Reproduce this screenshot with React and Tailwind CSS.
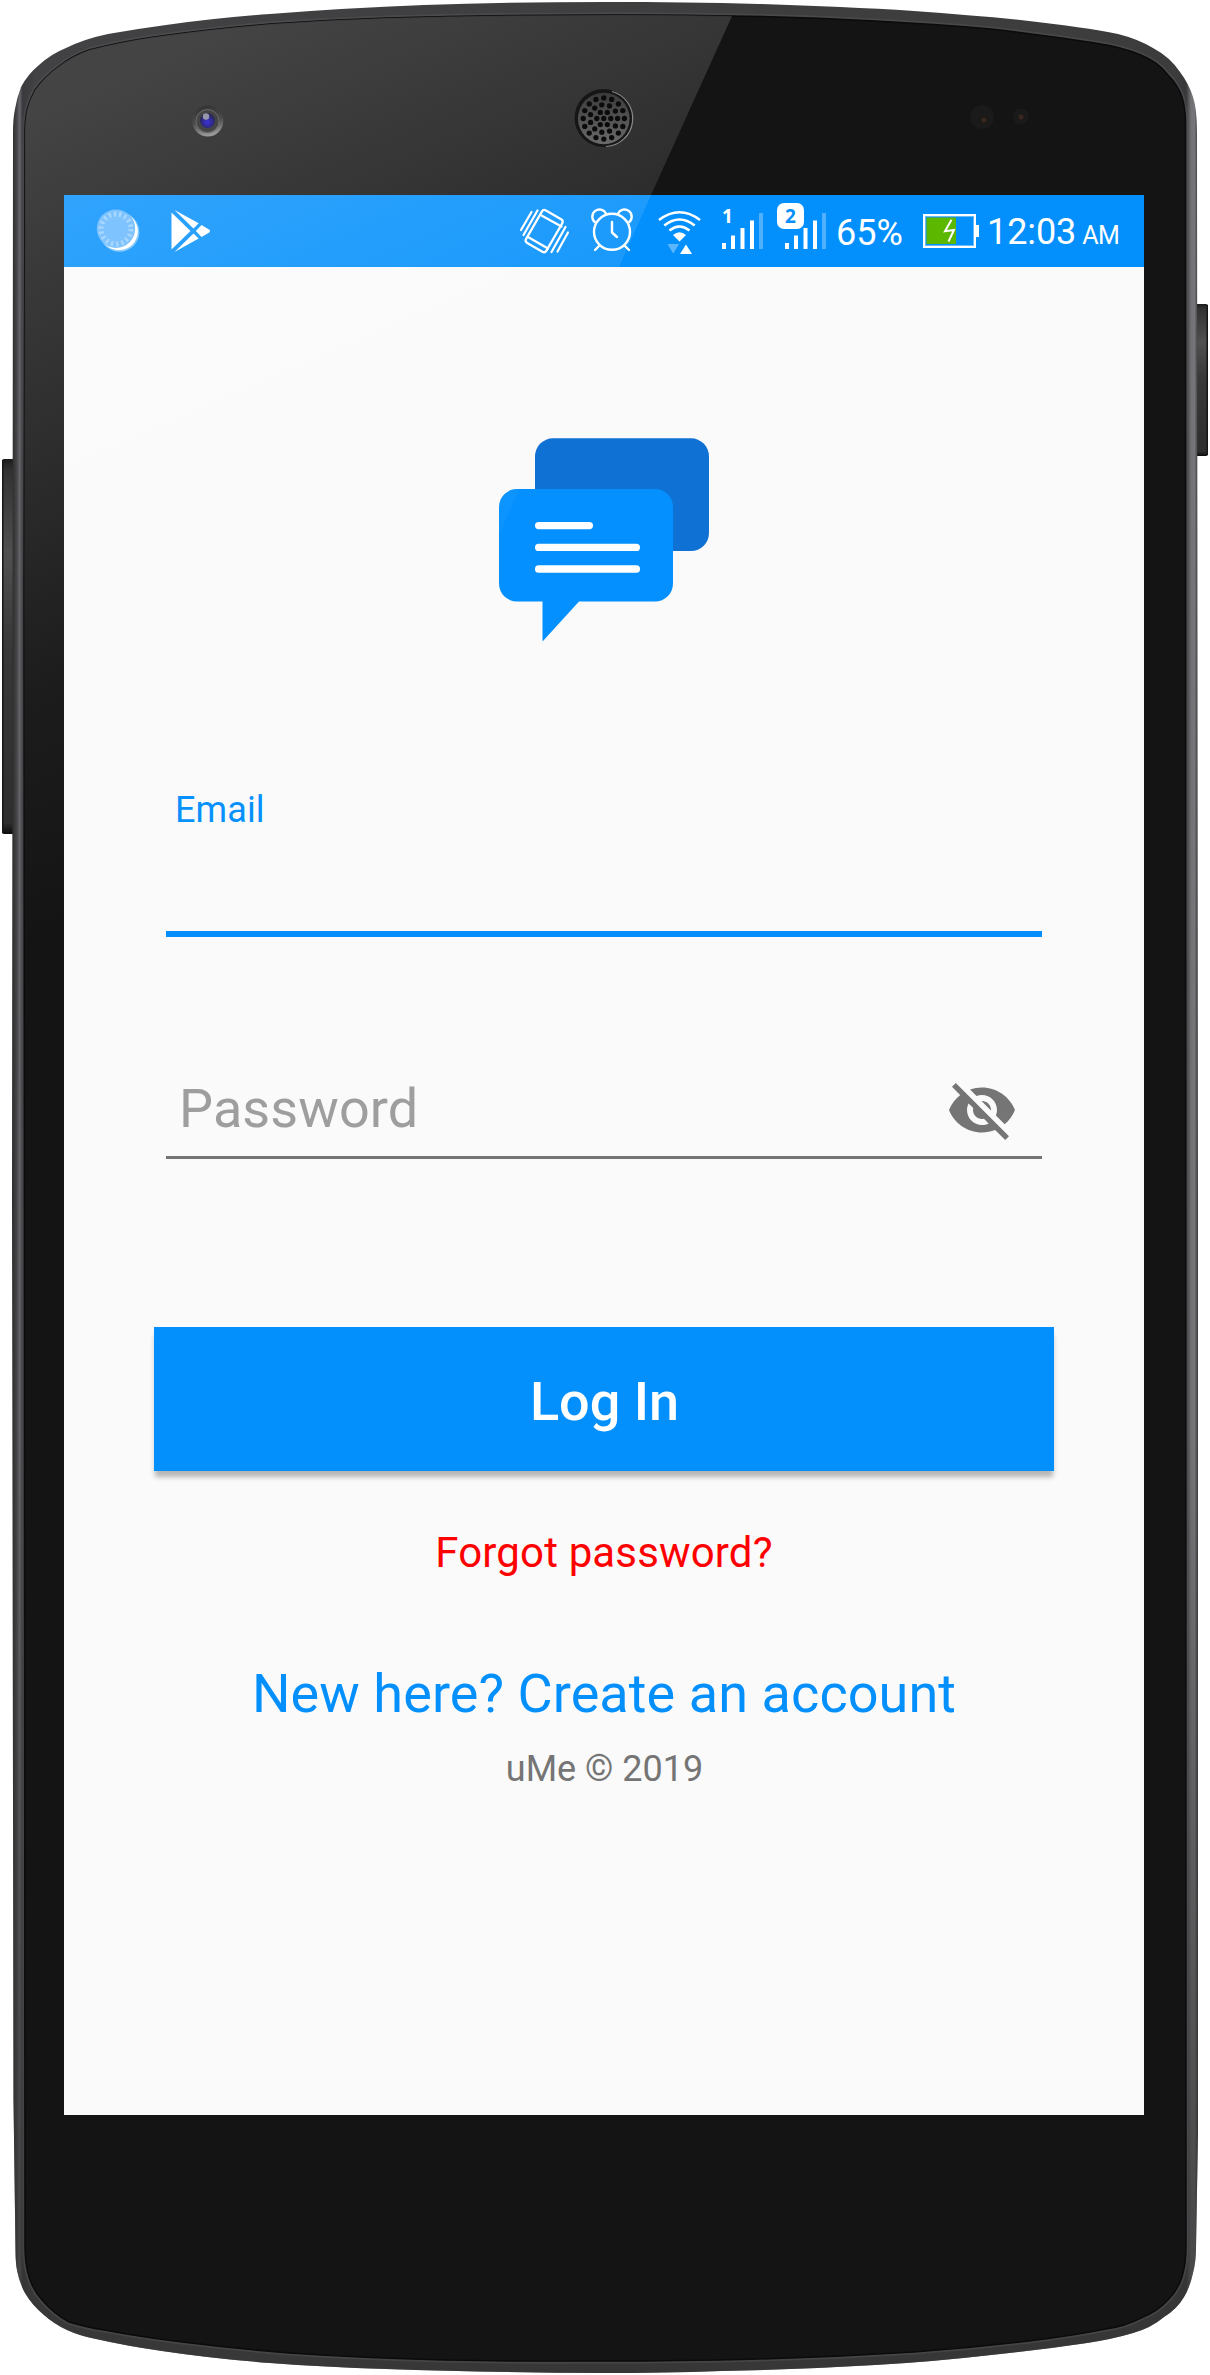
import React from "react";

const OUTER =
  "M605 2 C658 2 710 2.5 759 4 C814 6 866 8 914 11 C955 14 993 17 1029 21 C1062 25 1096 29 1118 34 Q1138 39 1153 48 Q1170 57 1180 72 Q1189 84 1193 97 Q1197 109 1197 133 L1198 1200 L1198 2133 L1196 2247 Q1196 2262 1193 2273 Q1190 2287 1184 2297 Q1177 2309 1164 2317 Q1151 2328 1133 2333 Q1113 2339 1087 2343 Q1040 2350 991 2355 Q930 2362 875 2365 Q800 2369.500 721 2371 Q660 2373 605 2373 Q490 2372.500 386 2369 Q325 2367 270 2363 Q212 2358.500 162 2351 Q127 2346 96 2339 Q80 2336 67 2330 Q54 2324 44 2315 Q32 2305 25 2293 Q19 2282 17 2270 Q15.500 2262 15.500 2250 L13.500 2100 L12 1200 L13 133 Q13 118 15 109 Q17 97 21 87 Q28 74 39 65 Q51 54 66 48 Q84 39 108 34 Q136 29 166 25 Q216 18 270 14 Q345 8 424 5 Q510 2 605 2 Z";

const INNER =
  "M605 15 Q670 14.500 732 16 Q805 17 875 21 Q935 24 991 29 Q1045 35 1095 43 Q1122 47 1141 55 Q1158 62 1168 75 Q1178 85 1182 97 Q1185.500 108 1185.500 125 L1186 2247 Q1186 2264 1182 2277 Q1178 2290 1168 2300 Q1157 2312 1141 2318 Q1126 2326 1106 2329 Q1070 2336 1029 2341 Q972 2348 914 2352 Q837 2357 759 2359 Q680 2361 605 2361 Q520 2361.500 444 2360 Q364 2358 289 2353 Q229 2348 174 2341 Q136 2336 104 2330 Q85 2327 69 2322 Q54 2314 42 2300 Q33 2290 29 2277 Q25 2264 25 2247 L24 600 L25 133 Q25 120 27 110 Q30 99 35 90 Q45 76 58 67 Q72 56 89 50 Q120 42 154 37 Q210 29 270 24 Q326 20 386 18 Q495 15 605 15 Z";

const HOLES = [
  { count: 1, radius: 0 },
  { count: 6, radius: 7 },
  { count: 11, radius: 13.8 },
  { count: 16, radius: 20.6 },
].flatMap(({ count, radius }) =>
  Array.from({ length: count }, (_, i) => {
    const a = (i * 2 * Math.PI) / count;
    return [603.8 + radius * Math.cos(a), 118.5 + radius * Math.sin(a)];
  })
);

function PhoneBody() {
  return (
    <svg className="absolute inset-0" width="1210" height="2375" viewBox="0 0 1210 2375" aria-hidden="true">
      <defs>
        <linearGradient id="rimX" x1="0" x2="1">
          <stop offset="0" stopColor="#2b2b2d" />
          <stop offset="0.004" stopColor="#454548" />
          <stop offset="0.0065" stopColor="#66666a" />
          <stop offset="0.009" stopColor="#3a3a3e" />
          <stop offset="0.02" stopColor="#424244" />
          <stop offset="0.98" stopColor="#3c3c3d" />
          <stop offset="0.99" stopColor="#38383a" />
          <stop offset="0.994" stopColor="#707074" />
          <stop offset="0.997" stopColor="#77777a" />
          <stop offset="1" stopColor="#3a3a3c" />
        </linearGradient>
        <linearGradient id="rimFade" x1="0" x2="0" y1="0" y2="1">
          <stop offset="0.6" stopColor="#333" stopOpacity="0" />
          <stop offset="0.93" stopColor="#333" stopOpacity="0.65" />
        </linearGradient>
        <linearGradient id="keyY" x1="0" x2="0" y1="0" y2="1">
          <stop offset="0" stopColor="#1c1c1c" />
          <stop offset="0.03" stopColor="#323232" />
          <stop offset="0.25" stopColor="#505050" />
          <stop offset="0.5" stopColor="#383838" />
          <stop offset="0.97" stopColor="#2e2e2e" />
          <stop offset="1" stopColor="#0c0c0c" />
        </linearGradient>
      </defs>
      <rect x="2" y="459" width="14" height="375" rx="2" fill="url(#keyY)" />
      <rect x="2" y="460" width="1.500" height="373" fill="#161616" />
      <rect x="1194" y="304" width="14" height="152" rx="2" fill="url(#keyY)" />
      <rect x="1206.500" y="305" width="1.500" height="150" fill="#161616" />
      <path d={OUTER} fill="url(#rimX)" />
      <path d={OUTER} fill="url(#rimFade)" />
      <path d={INNER} fill="none" stroke="#5a5a5c" strokeWidth="5" strokeOpacity="0.4" />
      <path d={INNER} fill="#141414" stroke="#0b0b0d" strokeWidth="1.500" />
      <circle cx="982" cy="117" r="12" fill="#1b1a1a" />
      <circle cx="984" cy="120" r="2.500" fill="#38261f" />
      <circle cx="1021" cy="116.500" r="8" fill="#1b1a1a" />
      <circle cx="1021" cy="117" r="2.500" fill="#38261f" />
    </svg>
  );
}

function Gloss() {
  return (
    <svg className="pointer-events-none absolute inset-0" width="1210" height="2375" viewBox="0 0 1210 2375" aria-hidden="true">
      <defs>
        <linearGradient id="gloss" gradientUnits="userSpaceOnUse" x1="46" y1="106" x2="352" y2="810">
          <stop offset="0" stopColor="#fff" stopOpacity="0.205" />
          <stop offset="0.5" stopColor="#fff" stopOpacity="0.085" />
          <stop offset="0.7" stopColor="#fff" stopOpacity="0.035" />
          <stop offset="1" stopColor="#fff" stopOpacity="0" />
        </linearGradient>
        <linearGradient id="lensRing" x1="0.4" x2="0.6" y1="0" y2="1">
          <stop offset="0" stopColor="#333" />
          <stop offset="0.5" stopColor="#4c4c4c" />
          <stop offset="1" stopColor="#a2a2a2" />
        </linearGradient>
        <radialGradient id="lens" cx="0.5" cy="0.6" r="0.6">
          <stop offset="0" stopColor="#3d32d8" />
          <stop offset="0.6" stopColor="#2d2a86" />
          <stop offset="1" stopColor="#26263c" />
        </radialGradient>
        <linearGradient id="mesh" x1="0" x2="0" y1="0" y2="1">
          <stop offset="0" stopColor="#3a3a3a" />
          <stop offset="1" stopColor="#6a6a6a" />
        </linearGradient>
        <clipPath id="beam">
          <path d="M0 0 H739 L732 16 L651 195 L619 267 L380 800 L0 1600 Z" />
        </clipPath>
      </defs>
      <path d={INNER} fill="url(#gloss)" clipPath="url(#beam)" />
      <circle cx="207.800" cy="121" r="15.500" fill="url(#lensRing)" />
      <circle cx="207.500" cy="121" r="11.500" fill="#454546" stroke="#6a6a6a" strokeWidth="1" />
      <circle cx="207.500" cy="120.500" r="7.500" fill="url(#lens)" />
      <circle cx="206" cy="116.500" r="3.200" fill="#a0a3b0" opacity="0.9" />
      <circle cx="603.500" cy="118" r="29" fill="#161616" />
      <path d="M612 91.500 A28 28 0 0 1 606 146.500" fill="none" stroke="#888" strokeWidth="1.200" />
      <circle cx="603.800" cy="118.500" r="25.800" fill="url(#mesh)" />
      {HOLES.map(([x, y]) => (
        <circle key={`${x}-${y}`} cx={x} cy={y} r="2.650" fill="#0b0b0b" />
      ))}
    </svg>
  );
}

function BarIcon({ x, width, className, children }) {
  return (
    <svg className={`shrink-0 ${className}`} width={width} height="72" viewBox={`${x} 195 ${width} 72`} fill="none" aria-hidden="true">
      {children}
    </svg>
  );
}

const signalBars = [
  [0, 48, 6],
  [9, 40.5, 13.5],
  [18.5, 33, 21],
  [28, 25.5, 28.5],
];

function Bars({ x }) {
  return (
    <g fill="#fff">
      {signalBars.map(([dx, y, h]) => (
        <rect key={dx} x={x + dx} y={195 + y} width="4" height={h} />
      ))}
      <rect x={x + 37} y="213" width="4" height="36" opacity="0.3" />
    </g>
  );
}

function StatusBar() {
  return (
    <div className="flex h-[72px] items-center bg-[#0490fc] text-white">
      <BarIcon x={94} width={48} className="ml-[30px]">
        <circle cx="119.500" cy="232" r="19.800" fill="#fff" opacity="0.45" />
        <circle cx="118.800" cy="231.300" r="19" fill="#fff" />
        <circle cx="116" cy="228.700" r="19.200" fill="#66b8fe" />
        <circle cx="116" cy="229" r="15" stroke="#98cffe" strokeWidth="5" strokeDasharray="2.400 2.836" />
      </BarIcon>
      <BarIcon x={169} width={44} className="ml-[27px]">
        <g fill="#fff">
          <path d="M171.500 212.500 L190.500 231 L171.500 249.500 Z" />
          <path d="M174.500 210 L198.700 223.300 L193.500 228.500 Z" />
          <path d="M174.500 252 L198.700 238.500 L193.500 233.500 Z" />
          <path d="M201.500 225 L208.500 229.300 Q211.500 231 208.500 233 L201.500 237 L195.800 231 Z" />
        </g>
      </BarIcon>
      <BarIcon x={518} width={54} className="ml-[305px]">
        <g stroke="#fff" strokeWidth="2.200" strokeLinecap="round" strokeLinejoin="round">
          <rect x="532.500" y="212.500" width="23.500" height="37.500" rx="3" transform="rotate(30 544.500 231)" />
          <path d="M541.500 215.500 L561.500 226.500 M527.500 236.800 L548 248.500" />
          <path d="M531.500 212 L521 230 M537.500 210.500 L523.500 235" />
          <path d="M557.500 251.500 L568 232.500 M551.500 252 L565.500 227" />
        </g>
      </BarIcon>
      <BarIcon x={590} width={44} className="ml-[18px]">
        <g stroke="#fff" strokeWidth="2.400" strokeLinecap="round" strokeLinejoin="round">
          <circle cx="612" cy="231.800" r="18" />
          <path d="M612 222 V232.500 L617 237" />
          <path d="M594.700 222 A7.200 7.200 0 1 1 606 213.500 M629.300 222 A7.200 7.200 0 1 0 618 213.500" />
          <path d="M599.500 245.500 L595 250 M624.500 245.500 L629 250" />
        </g>
      </BarIcon>
      <BarIcon x={656} width={48} className="ml-[22px]">
        <g stroke="#fff" strokeWidth="2.600">
          <path d="M659 220 Q679.500 204.500 700 220" />
          <path d="M664.300 225.500 Q679.500 213.500 694.700 225.500" />
          <path d="M669.500 230.500 Q679.500 222.500 689.500 230.500" />
        </g>
        <path d="M673 235 Q679.500 229.500 686 235 L679.500 241.500 Z" fill="#fff" />
        <path d="M667.500 244 H679 L673.200 253.500 Z" fill="#fff" opacity="0.35" />
        <path d="M680 254 H692 L686 244.500 Z" fill="#fff" />
      </BarIcon>
      <div className="relative ml-[18px] h-[72px] w-[41px] shrink-0">
        <BarIcon x={722} width={41} className="block">
          <Bars x={722} />
        </BarIcon>
        <span className="absolute left-0 top-[11px] w-[11px] text-center font-['Noto_Sans'] text-[19px] font-bold leading-[20px]">1</span>
      </div>
      <div className="relative ml-[14px] h-[72px] w-[49px] shrink-0">
        <BarIcon x={777} width={49} className="block">
          <Bars x={785} />
        </BarIcon>
        <span className="absolute left-0 top-[8px] flex h-[26px] w-[27px] items-center justify-center rounded-[7px] bg-white font-['Noto_Sans'] text-[19px] font-bold leading-[26px] text-[#0490fc]">
          2
        </span>
      </div>
      <span className="ml-[10px] w-[68px] whitespace-nowrap pt-[4px] text-[36px] leading-[68px]">65%</span>
      <BarIcon x={922} width={60} className="ml-[18px]">
        <rect x="924" y="215" width="51" height="32" stroke="#fff" strokeWidth="2" />
        <rect x="925.500" y="216.500" width="48" height="29" stroke="#fff" strokeWidth="1" opacity="0.4" />
        <rect x="976" y="225" width="3" height="12" fill="#fff" />
        <rect x="926.500" y="217.500" width="29.500" height="26.500" fill="#5cb700" />
        <path d="M951.500 219.800 L945 231.300 L954 230 L948.500 241.500" stroke="#fff" strokeWidth="2" />
      </BarIcon>
      <span className="ml-[5px] whitespace-nowrap pt-[5px] text-[36px] leading-[67px] tracking-[-0.1px]">
        12:03<span className="ml-[6px] text-[25px] tracking-[-0.5px]">AM</span>
      </span>
    </div>
  );
}

function ChatLogo() {
  return (
    <svg className="mx-auto mt-[170px] block h-[206px] w-[212px] shrink-0" viewBox="498 437 212 206" aria-hidden="true">
      <rect x="535" y="438.300" width="174" height="112.700" rx="18" fill="#0f71d3" />
      <path d="M517 489 H655 A18 18 0 0 1 673 507 V583.500 A18 18 0 0 1 655 601.500 H579 L542.500 641.500 V601.500 H517 A18 18 0 0 1 499 583.500 V507 A18 18 0 0 1 517 489 Z" fill="#0490ff" />
      <g fill="#fff">
        <rect x="535" y="522" width="58" height="7.200" rx="3.600" />
        <rect x="535" y="543.700" width="105" height="7.300" rx="3.600" />
        <rect x="535" y="565.300" width="105" height="7.500" rx="3.600" />
      </g>
    </svg>
  );
}

function EyeOff() {
  return (
    <svg className="size-[72px]" viewBox="0 0 24 24" fill="#757575" aria-hidden="true">
      <path d="M12 7c2.76 0 5 2.24 5 5 0 .65-.13 1.26-.36 1.83l2.92 2.92c1.51-1.26 2.7-2.89 3.43-4.75-1.73-4.39-6-7.5-11-7.5-1.4 0-2.74.25-3.98.7l2.16 2.16C10.74 7.13 11.35 7 12 7zM2 4.27l2.28 2.28.46.46C3.08 8.3 1.78 10.02 1 12c1.73 4.39 6 7.5 11 7.5 1.55 0 3.03-.3 4.38-.84l.42.42L19.73 22 21 20.73 3.27 3 2 4.27zM7.53 9.8l1.55 1.55c-.05.21-.08.43-.08.65 0 1.66 1.34 3 3 3 .22 0 .44-.03.65-.08l1.55 1.55c-.67.33-1.41.53-2.2.53-2.76 0-5-2.24-5-5 0-.79.2-1.53.53-2.2zm4.31-.78l3.15 3.15.02-.16c0-1.66-1.34-3-3-3l-.17.01z" />
    </svg>
  );
}

function LoginForm() {
  return (
    <form className="flex flex-1 flex-col">
      <ChatLogo />
      <div className="mx-[102px] mt-[149px] h-[145px] border-b-[6px] border-[#0490fc] pl-[9px]">
        <label className="block text-[36px] leading-[36px] tracking-[0.1px] text-[#0490fc]">Email</label>
      </div>
      <div className="mx-[102px] mt-[137px] flex h-[85px] items-start justify-between border-b-[3px] border-[#757575] pl-[13px] pr-[24px]">
        <label className="mt-[8px] text-[54px] leading-[54px] tracking-[0.1px] text-[#9e9e9e]">Password</label>
        <button type="button" aria-label="Show password">
          <EyeOff />
        </button>
      </div>
      <button
        type="button"
        className="mx-[90px] mt-[168px] h-[144px] shrink-0 bg-[#0490fc] pl-px pt-[6px] text-[54px] font-medium leading-[54px] text-white shadow-[0_7px_5px_-1px_rgba(0,0,0,0.28)]"
      >
        Log In
      </button>
      <a className="mt-[61px] text-center text-[42px] leading-[42px] tracking-[0.15px] text-[#ff0000]">Forgot password?</a>
      <a className="mt-[93px] text-center text-[54px] leading-[54px] tracking-[0.08px] text-[#0490fc]">New here? Create an account</a>
      <p className="mt-[30px] pl-px text-center text-[36px] leading-[36px] text-[#757575]">uMe © 2019</p>
    </form>
  );
}

export default function App() {
  return (
    <main className="relative h-[2375px] w-[1210px] overflow-hidden bg-white pl-[64px] pt-[195px] font-['Roboto',sans-serif]">
      <PhoneBody />
      <section className="relative flex h-[1920px] w-[1080px] flex-col bg-[#fafafa]">
        <StatusBar />
        <LoginForm />
      </section>
      <Gloss />
    </main>
  );
}
